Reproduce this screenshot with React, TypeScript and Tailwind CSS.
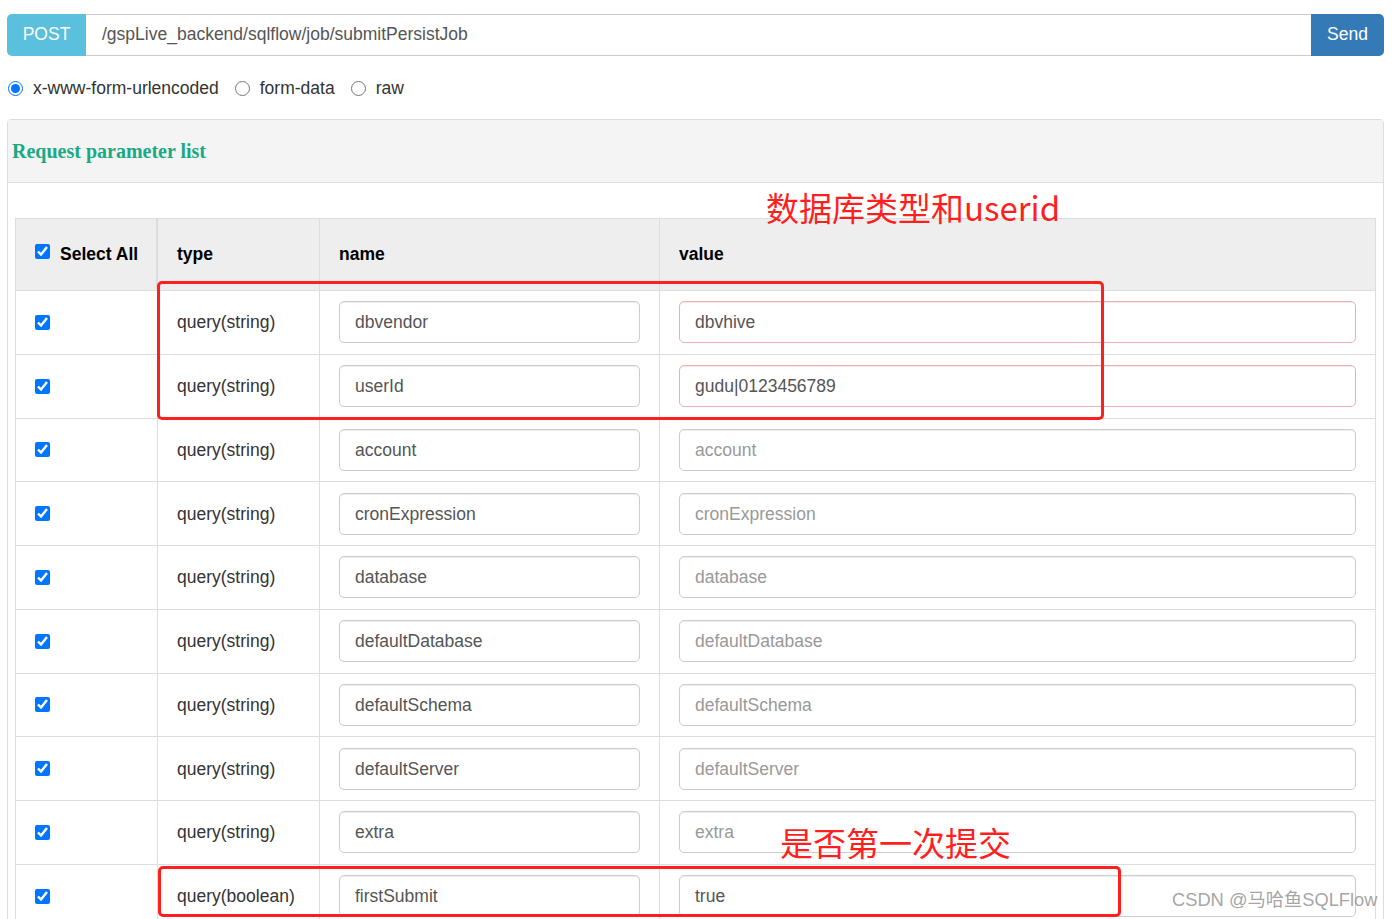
import React from 'react';

type Param = { type: string; name: string; value: string; filled?: boolean };

const params: Param[] = [
  { type: 'query(string)', name: 'dbvendor', value: 'dbvhive', filled: true },
  { type: 'query(string)', name: 'userId', value: 'gudu|0123456789', filled: true },
  { type: 'query(string)', name: 'account', value: 'account' },
  { type: 'query(string)', name: 'cronExpression', value: 'cronExpression' },
  { type: 'query(string)', name: 'database', value: 'database' },
  { type: 'query(string)', name: 'defaultDatabase', value: 'defaultDatabase' },
  { type: 'query(string)', name: 'defaultSchema', value: 'defaultSchema' },
  { type: 'query(string)', name: 'defaultServer', value: 'defaultServer' },
  { type: 'query(string)', name: 'extra', value: 'extra' },
  { type: 'query(boolean)', name: 'firstSubmit', value: 'true', filled: true },
];

const Check = () => (
  <input type="checkbox" checked readOnly className="w-[15px] h-[15px] m-0 accent-[#0075ff]" />
);

const Field: React.FC<{ text: string; muted?: boolean; pink?: boolean }> = ({ text, muted, pink }) => (
  <div
    className={`h-[42px] w-full rounded-[5px] border flex items-center px-[15px] shadow-[inset_0_1px_1px_rgba(0,0,0,0.075)] ${
      pink ? 'border-[#eab0b0]' : 'border-[#ccc]'
    } ${muted ? 'text-[#999]' : 'text-[#555]'}`}
  >
    {text}
  </div>
);

const Row: React.FC<{ p: Param; i: number }> = ({ p, i }) => (
  <div className="flex h-[63.75px] border-t border-[#ddd]">
    <div className="w-[142px] shrink-0 flex items-center pl-[19px] border-r border-[#ddd]">
      <Check />
    </div>
    <div className="w-[162px] shrink-0 flex items-center pl-[19px] border-r border-[#ddd] text-[#333]">{p.type}</div>
    <div className="w-[340px] shrink-0 flex items-center px-[19px] border-r border-[#ddd]">
      <Field text={p.name} />
    </div>
    <div className="flex-1 flex items-center px-[19px]">
      <Field text={p.value} muted={!p.filled} pink={i < 2} />
    </div>
  </div>
);

export default function App() {
  return (
    <div className="relative w-[1393px] h-[919px] overflow-hidden bg-white text-[17.5px] text-[#333]" style={{ fontFamily: '"Liberation Sans", Arial, sans-serif' }}>
      <div className="pt-[14px] pl-[7px] pr-[9px]">
        {/* request line */}
        <div className="flex h-[42px]">
          <div className="w-[79px] bg-[#5bc0de] text-white rounded-l-[5px] flex items-center justify-center pb-[2px]">POST</div>
          <div className="flex-1 border-y border-[#ccc] flex items-center pl-[16px] pb-[2px] text-[#555]">/gspLive_backend/sqlflow/job/submitPersistJob</div>
          <div className="w-[73px] bg-[#337ab7] text-white rounded-r-[5px] flex items-center justify-center pb-[2px]">Send</div>
        </div>

        {/* body type */}
        <div className="flex items-center h-[24px] mt-[20px] gap-[10px]">
          <label className="flex items-center gap-[10px]">
            <input type="radio" name="bt" checked readOnly className="w-[15px] h-[15px] m-0 ml-[1px] accent-[#0075ff]" />
            x-www-form-urlencoded
          </label>
          <label className="flex items-center gap-[10px] ml-[6px]">
            <input type="radio" name="bt" readOnly className="w-[15px] h-[15px] m-0" />
            form-data
          </label>
          <label className="flex items-center gap-[10px] ml-[6px]">
            <input type="radio" name="bt" readOnly className="w-[15px] h-[15px] m-0" />
            raw
          </label>
        </div>

        {/* panel */}
        <div className="mt-[19px] border border-[#ddd] rounded-t-[4px]">
          <div className="h-[63px] bg-[#f4f4f4] border-b border-[#ddd] flex items-center pl-[4px]">
            <span className="font-bold text-[20px] text-[#1aa985]" style={{ fontFamily: '"Liberation Serif", "Times New Roman", serif' }}>
              Request parameter list
            </span>
          </div>
          <div className="pt-[35px] px-[7px]">
            <div className="border border-[#ddd] border-b-0">
              <div className="flex h-[71px] bg-[#eee] font-bold text-black">
                <div className="w-[142px] shrink-0 flex items-center pl-[19px] gap-[10px] border-r-2 border-[#ddd]">
                  <input type="checkbox" checked readOnly className="w-[15px] h-[15px] m-0 -mt-[6px] accent-[#0075ff]" />
                  Select All
                </div>
                <div className="w-[162px] shrink-0 flex items-center pl-[19px] border-r border-[#ddd]">type</div>
                <div className="w-[340px] shrink-0 flex items-center pl-[19px] border-r border-[#ddd]">name</div>
                <div className="flex-1 flex items-center pl-[19px]">value</div>
              </div>
              {params.map((p, i) => (
                <Row key={p.name} p={p} i={i} />
              ))}
            </div>
          </div>
        </div>
      </div>

      {/* annotations */}
      <div className="absolute left-[157px] top-[281px] w-[947px] h-[139px] border-[3.5px] border-[#ff1f1f] rounded-[5px]" />
      <div className="absolute left-[158px] top-[866px] w-[963px] h-[51px] border-[3.5px] border-[#ff1f1f] rounded-[5px]" />
      <div
        className="absolute left-[766px] top-[191px] text-[33px] leading-none text-[#ff1f1f]"
        style={{ fontFamily: '"Noto Sans CJK SC", "Noto Sans", sans-serif' }}
      >
        数据库类型和userid
      </div>
      <div
        className="absolute left-[780px] top-[826px] text-[33px] leading-none text-[#ff1f1f]"
        style={{ fontFamily: '"Noto Sans CJK SC", sans-serif' }}
      >
        是否第一次提交
      </div>
      <div
        className="absolute left-[1172px] top-[886px] text-[18.3px] text-[#9a9a9a]/90"
        style={{ fontFamily: '"Liberation Sans", "Noto Sans CJK SC", sans-serif' }}
      >
        CSDN @马哈鱼SQLFlow
      </div>
    </div>
  );
}
